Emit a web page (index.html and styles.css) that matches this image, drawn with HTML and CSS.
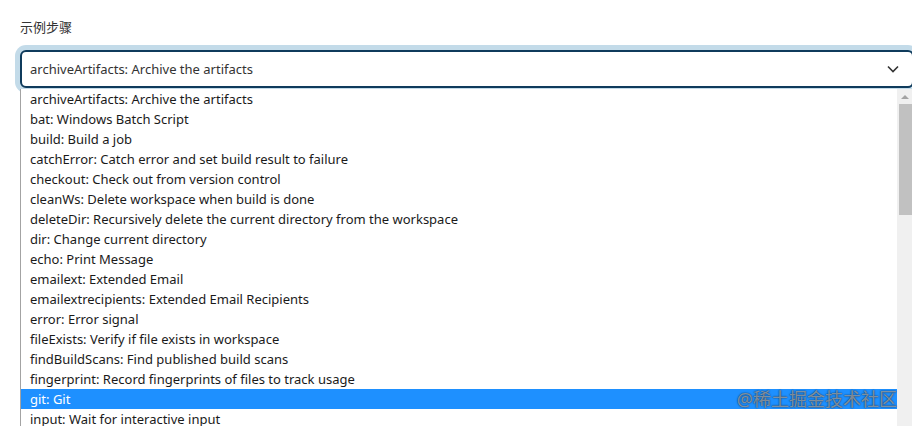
FILE: index.html
```html
<!DOCTYPE html>
<html lang="zh">
<head>
<meta charset="utf-8">
<link rel="stylesheet" href="styles.css">
</head>
<body>
<div class="page">
  <div class="label">示例步骤</div>
  <div class="select">
    <span class="value">archiveArtifacts: Archive the artifacts</span>
    <svg class="chev" width="12" height="8" viewBox="0 0 12 8"><path d="M1 1.5 L6 6.5 L11 1.5" fill="none" stroke="#333" stroke-width="1.6"/></svg>
  </div>
  <div class="dropdown">
    <ul class="options">
      <li>archiveArtifacts: Archive the artifacts</li>
      <li>bat: Windows Batch Script</li>
      <li>build: Build a job</li>
      <li>catchError: Catch error and set build result to failure</li>
      <li>checkout: Check out from version control</li>
      <li>cleanWs: Delete workspace when build is done</li>
      <li>deleteDir: Recursively delete the current directory from the workspace</li>
      <li>dir: Change current directory</li>
      <li>echo: Print Message</li>
      <li>emailext: Extended Email</li>
      <li>emailextrecipients: Extended Email Recipients</li>
      <li>error: Error signal</li>
      <li>fileExists: Verify if file exists in workspace</li>
      <li>findBuildScans: Find published build scans</li>
      <li>fingerprint: Record fingerprints of files to track usage</li>
      <li class="active">git: Git</li>
      <li>input: Wait for interactive input</li>
    </ul>
    <div class="scrollbar">
      <div class="arrow"></div>
      <div class="thumb"></div>
    </div>
    <div class="watermark">@稀土掘金技术社区</div>
  </div>
</div>
</body>
</html>
```

FILE: styles.css
```css
html, body {
  margin: 0;
  padding: 0;
  background: #fff;
  overflow: hidden;
}
body {
  font-family: "Noto Sans", "Noto Sans CJK SC", sans-serif;
  font-size: 13px;
  color: #333;
}
.page {
  padding: 17px 0 0 20px;
}
.label {
  height: 20px;
  line-height: 20px;
  font-size: 13px;
  color: #333;
  margin-bottom: 13px;
}
.select {
  box-sizing: border-box;
  height: 38px;
  width: 894px;
  border: 2px solid #0f3b5c;
  border-radius: 6px;
  box-shadow: 0 0 0 5px #c3dbe9;
  display: flex;
  align-items: center;
  justify-content: space-between;
  padding: 0 13px 0 8px;
  background: #fff;
}
.value {
  color: #333;
  font-size: 13px;
}
.chev {
  display: block;
}
.dropdown {
  position: relative;
  margin-top: 1px;
  display: flex;
  width: 892px;
  border-left: 1px solid #a3a3a3;
  height: 340px;
  background: #fff;
}
.options {
  list-style: none;
  margin: 0;
  padding: 0;
  flex: 1;
}
.options li {
  height: 20px;
  line-height: 20px;
  padding-left: 9px;
  color: #1a1a1a;
  white-space: nowrap;
}
.options li.active {
  background: #1e90ff;
  color: #fff;
}
.scrollbar {
  width: 16px;
  background: #f0f0f0;
  display: flex;
  flex-direction: column;
  align-items: center;
}
.arrow {
  margin-top: 6px;
  width: 0;
  height: 0;
  border-left: 4px solid transparent;
  border-right: 4px solid transparent;
  border-bottom: 4px solid #a3a3a3;
}
.thumb {
  margin-top: 5px;
  width: 13px;
  height: 111px;
  background: #c1c1c1;
}
.watermark {
  position: absolute;
  right: 16px;
  top: 299px;
  height: 22px;
  line-height: 22px;
  font-size: 18px;
  color: rgba(230, 236, 245, 0.55);
  text-shadow: 0 0 1px rgba(0, 0, 0, 0.8), 0 0 2px rgba(0, 0, 0, 0.35);
}
```
